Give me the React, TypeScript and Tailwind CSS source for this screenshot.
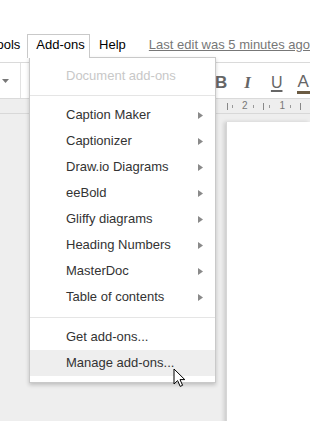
import React from 'react';

const items = [
    'Caption Maker',
    'Captionizer',
    'Draw.io Diagrams',
    'eeBold',
    'Gliffy diagrams',
    'Heading Numbers',
    'MasterDoc',
    'Table of contents',
];

function SubArrow() {
    return (
        <svg width="5" height="7" viewBox="0 0 5 7" className="shrink-0">
            <path d="M0 0 L5 3.5 L0 7 Z" fill="#8a8a8a" />
        </svg>
    );
}

function Cursor() {
    return (
        <svg width="13" height="20" viewBox="0 0 13 20" className="absolute left-[173px] top-[368px] z-30">
            <path
                d="M1 1 L1 16 L4.6 12.6 L7.2 18.4 L9.6 17.3 L7 11.6 L11.8 11.6 Z"
                fill="#fff"
                stroke="#000"
                strokeWidth="1"
                strokeLinejoin="miter"
            />
        </svg>
    );
}

function App() {
    return (
        <div className="relative w-[310px] h-[421px] overflow-hidden bg-[#eeeeee] font-['Liberation_Sans',Arial,sans-serif] text-[13px]">
            {/* menu bar */}
            <div className="h-[63px] bg-white border-b border-[#dadada] relative">
                <div className="flex items-start pt-[34px] whitespace-nowrap">
                    <span className="ml-[-10px] mt-[3px] text-black leading-[16px]">Tools</span>
                    <div className="relative z-20 ml-[7px] h-[24px] w-[65px] bg-white border border-b-0 border-[#c9c9c9] pl-[8px] pt-[2px] leading-[16px] text-black">
                        Add-ons
                    </div>
                    <span className="ml-[9px] mt-[3px] leading-[16px] text-black">Help</span>
                    <span className="ml-[23px] mt-[3px] leading-[16px] text-[#777] underline">Last edit was 5 minutes ago</span>
                </div>
            </div>

            {/* toolbar */}
            <div className="h-[36px] bg-white border-b border-[#dadada] flex items-center relative">
                <svg width="7" height="4" viewBox="0 0 7 4" className="ml-[2px] mt-[1px]">
                    <path d="M0 0 L7 0 L3.5 4 Z" fill="#777" />
                </svg>
                <div className="ml-[11px] h-full border-l border-[#e2e2e2]" />
                <div className="absolute left-[215px] top-[10px] flex items-start text-[#666]">
                    <span className="font-bold text-[17px] leading-[20px]">B</span>
                    <span className="ml-[17px] italic font-bold text-[17px] leading-[20px] font-['Liberation_Serif',serif]">I</span>
                    <span className="ml-[20px] text-[16px] leading-[20px] underline decoration-2 underline-offset-2">U</span>
                    <div className="ml-[15px] flex flex-col items-start">
                        <span className="text-[17px] leading-[18px]">A</span>
                        <div className="w-[14px] h-[3px] bg-[#6b5b43]" />
                    </div>
                </div>
            </div>

            {/* ruler */}
            <div className="h-[15px] bg-[#eeeeee] border-b border-[#d8d8d8] relative">
                <div className="absolute left-[215px] top-0 h-full right-0 flex items-center text-[10px] text-[#777] leading-none">
                    <div className="ml-[12px] w-[1px] h-[7px] bg-[#888]" />
                    <div className="ml-[4px] w-[1px] h-[3px] bg-[#999]" />
                    <span className="ml-[9px]">2</span>
                    <div className="ml-[5px] w-[1px] h-[3px] bg-[#999]" />
                    <div className="ml-[9px] w-[1px] h-[7px] bg-[#888]" />
                    <div className="ml-[5px] w-[1px] h-[3px] bg-[#999]" />
                    <span className="ml-[10px]">1</span>
                    <div className="ml-[5px] w-[1px] h-[3px] bg-[#999]" />
                    <div className="ml-[9px] w-[1px] h-[7px] bg-[#888]" />
                </div>
            </div>

            {/* document area */}
            <div className="pt-[8px] pl-[226px]">
                <div className="h-[320px] bg-white shadow-[-2px_0_4px_rgba(0,0,0,0.15)] border-l border-[#d6d6d6]" />
            </div>

            {/* dropdown */}
            <div className="absolute left-[29px] top-[57px] z-10 w-[187px] bg-white border border-[#c9c9c9] shadow-[0_2px_4px_rgba(0,0,0,0.2)] pt-[5px] pb-[6px] text-[#333] whitespace-nowrap">
                <div className="h-[26px] flex items-center pl-[36px] text-[#c8c8c8]">Document add-ons</div>
                <div className="mt-[6px] mb-[6px] border-t border-[#e5e5e5]" />
                {items.map((item) => (
                    <div key={item} className="h-[26px] flex items-center pl-[36px] pr-[12px] justify-between">
                        <span>{item}</span>
                        <SubArrow />
                    </div>
                ))}
                <div className="mt-[7px] mb-[6px] border-t border-[#e5e5e5]" />
                <div className="h-[26px] flex items-center pl-[36px]">Get add-ons...</div>
                <div className="h-[26px] flex items-center pl-[36px] bg-[#eeeeee]">Manage add-ons...</div>
            </div>

            <Cursor />
        </div>
    );
}

export default App;
